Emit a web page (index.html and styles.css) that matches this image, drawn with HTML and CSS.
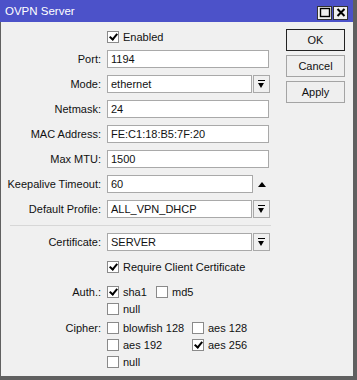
FILE: index.html
```html
<!DOCTYPE html>
<html lang="en">
<head>
    <meta charset="UTF-8">
    <title>OVPN Server</title>
    <link rel="stylesheet" href="styles.css">
</head>
<body>

    <div class="window">
        <div class="titlebar">
            <span class="title">OVPN Server</span>
            <div class="title-buttons">
                <span class="tbtn">
                    <svg width="12" height="11" viewBox="0 0 12 11"><rect x="1.5" y="1.5" width="9" height="8" fill="none" stroke="#000" stroke-width="1.4"/></svg>
                </span>
                <span class="tbtn">
                    <svg width="12" height="11" viewBox="0 0 12 11"><path d="M2.5 2 L9.5 9 M9.5 2 L2.5 9" stroke="#000" stroke-width="2"/></svg>
                </span>
            </div>
        </div>

        <div class="body">
            <div class="form">
                <div class="row row-top">
                    <span class="label"></span>
                    <label class="check"><span class="box on"></span>Enabled</label>
                </div>

                <div class="row">
                    <span class="label">Port:</span>
                    <div class="field">1194</div>
                </div>
                <div class="row">
                    <span class="label">Mode:</span>
                    <div class="field short">ethernet</div>
                    <span class="drop"></span>
                </div>
                <div class="row">
                    <span class="label">Netmask:</span>
                    <div class="field">24</div>
                </div>
                <div class="row">
                    <span class="label">MAC Address:</span>
                    <div class="field">FE:C1:18:B5:7F:20</div>
                </div>
                <div class="row">
                    <span class="label">Max MTU:</span>
                    <div class="field">1500</div>
                </div>
                <div class="row">
                    <span class="label">Keepalive Timeout:</span>
                    <div class="field keep">60</div>
                    <span class="up"></span>
                </div>
                <div class="row">
                    <span class="label">Default Profile:</span>
                    <div class="field short">ALL_VPN_DHCP</div>
                    <span class="drop"></span>
                </div>

                <div class="separator"></div>

                <div class="row">
                    <span class="label">Certificate:</span>
                    <div class="field short">SERVER</div>
                    <span class="drop"></span>
                </div>
                <div class="row row-check">
                    <span class="label"></span>
                    <label class="check"><span class="box on"></span>Require Client Certificate</label>
                </div>

                <div class="group auth">
                    <div class="crow">
                        <span class="label">Auth.:</span>
                        <label class="check"><span class="box on"></span>sha1</label>
                        <label class="check"><span class="box"></span>md5</label>
                    </div>
                    <div class="crow">
                        <span class="label"></span>
                        <label class="check"><span class="box"></span>null</label>
                    </div>
                </div>

                <div class="group cipher">
                    <div class="crow">
                        <span class="label">Cipher:</span>
                        <label class="check"><span class="box"></span>blowfish 128</label>
                        <label class="check"><span class="box"></span>aes 128</label>
                    </div>
                    <div class="crow">
                        <span class="label"></span>
                        <label class="check"><span class="box"></span>aes 192</label>
                        <label class="check"><span class="box on"></span>aes 256</label>
                    </div>
                    <div class="crow">
                        <span class="label"></span>
                        <label class="check"><span class="box"></span>null</label>
                    </div>
                </div>
            </div>

            <div class="buttons">
                <button class="default">OK</button>
                <button>Cancel</button>
                <button>Apply</button>
            </div>
        </div>
    </div>

</body>
</html>
```

FILE: styles.css
```css
body {
    margin: 0;
    padding: 0;
    font-family: 'Liberation Sans', Arial, sans-serif;
    font-size: 11px;
    color: #111;
    background: #fff;
}

.window {
    width: 357px;
    height: 380px;
    box-sizing: border-box;
    border-left: 1px solid #606060;
    border-right: 4px solid #606060;
    border-bottom: 4px solid #606060;
    background: #f0f0f0;
    display: flex;
    flex-direction: column;
}

.titlebar {
    height: 22px;
    background: #4c52c9;
    display: flex;
    align-items: center;
    justify-content: space-between;
    padding-left: 5px;
    margin-left: -1px;
}

.title {
    color: #fff;
    font-size: 11.5px;
}

.title-buttons {
    display: flex;
    gap: 1px;
    margin-right: 5px;
    margin-top: 3px;
}

.tbtn {
    width: 13px;
    height: 12px;
    background: #f0f0f0;
    border: 1px solid #333;
    display: flex;
    align-items: center;
    justify-content: center;
}

.body {
    flex: 1;
    display: flex;
}

.form {
    width: 285px;
    padding-top: 6px;
}

.row {
    display: flex;
    align-items: center;
    height: 18px;
    margin-bottom: 7px;
}

.row-top {
    margin-bottom: 4px;
}

.label {
    width: 100px;
    padding-right: 6px;
    text-align: right;
    flex-shrink: 0;
}

.field {
    width: 162px;
    height: 18px;
    box-sizing: border-box;
    border: 1px solid #a9a9a9;
    background: #fff;
    padding: 0 3px;
    line-height: 16px;
    white-space: nowrap;
    overflow: hidden;
}

.field.short {
    width: 145px;
}

.field.keep {
    width: 146px;
}

.drop {
    width: 17px;
    height: 18px;
    box-sizing: border-box;
    margin-left: 1px;
    border: 1px solid #a9a9a9;
    background: #f0f0f0;
    position: relative;
}

.drop::before {
    content: '';
    position: absolute;
    left: 4px;
    top: 4px;
    width: 7px;
    height: 1px;
    background: #000;
}

.drop::after {
    content: '';
    position: absolute;
    left: 4px;
    top: 7px;
    border-left: 3.5px solid transparent;
    border-right: 3.5px solid transparent;
    border-top: 5px solid #000;
}

.up {
    margin-left: 5px;
    border-left: 4px solid transparent;
    border-right: 4px solid transparent;
    border-bottom: 5px solid #000;
}

.separator {
    height: 1px;
    background: #d7d7d7;
    margin: 3px 15px 7px 9px;
}

.row-check {
    margin-top: 0;
    margin-bottom: 7px;
}

.check {
    display: flex;
    align-items: center;
    white-space: nowrap;
}

.box {
    width: 12px;
    height: 12px;
    box-sizing: border-box;
    border: 1px solid #8a8a8a;
    background: #fff;
    margin-right: 4px;
    position: relative;
}

.box.on::after {
    content: '';
    position: absolute;
    left: 3px;
    top: 0px;
    width: 3px;
    height: 6px;
    border-right: 2px solid #000;
    border-bottom: 2px solid #000;
    transform: rotate(40deg);
}

.group {
    margin-bottom: 2px;
}

.crow {
    display: flex;
    align-items: center;
    height: 17px;
}

.auth .check:nth-of-type(1) {
    width: 49px;
}

.cipher .check:nth-of-type(1) {
    width: 85px;
}

.buttons {
    display: flex;
    flex-direction: column;
    gap: 4px;
    padding-top: 7px;
    margin-left: 0;
}

.buttons button {
    width: 59px;
    height: 22px;
    font-family: 'Liberation Sans', Arial, sans-serif;
    font-size: 11px;
    color: #111;
    background: #efefef;
    border: 1px solid #a4a4a4;
    padding: 0;
}

.buttons button.default {
    border-color: #222;
}
```
